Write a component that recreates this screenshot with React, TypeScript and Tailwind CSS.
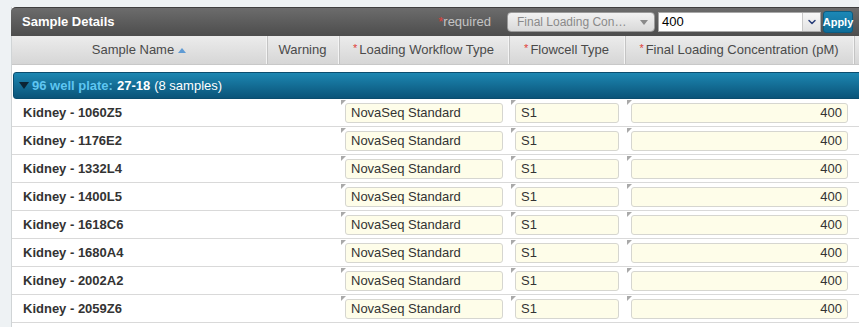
import { ChevronDown } from "lucide-react";

interface SampleRow {
  name: string;
  workflow: string;
  flowcell: string;
  concentration: string;
}

const SAMPLES: SampleRow[] = [
  { name: "Kidney - 1060Z5", workflow: "NovaSeq Standard", flowcell: "S1", concentration: "400" },
  { name: "Kidney - 1176E2", workflow: "NovaSeq Standard", flowcell: "S1", concentration: "400" },
  { name: "Kidney - 1332L4", workflow: "NovaSeq Standard", flowcell: "S1", concentration: "400" },
  { name: "Kidney - 1400L5", workflow: "NovaSeq Standard", flowcell: "S1", concentration: "400" },
  { name: "Kidney - 1618C6", workflow: "NovaSeq Standard", flowcell: "S1", concentration: "400" },
  { name: "Kidney - 1680A4", workflow: "NovaSeq Standard", flowcell: "S1", concentration: "400" },
  { name: "Kidney - 2002A2", workflow: "NovaSeq Standard", flowcell: "S1", concentration: "400" },
  { name: "Kidney - 2059Z6", workflow: "NovaSeq Standard", flowcell: "S1", concentration: "400" },
];

const GRID = "grid grid-cols-[255px_72px_170px_116px_229px_1fr]";

function Req() {
  return <span className="text-[#e0403a] text-[11px] mr-[2px] relative -top-[2px]">*</span>;
}

function HeaderCell({ children, last }: { children?: React.ReactNode; last?: boolean }) {
  return (
    <div
      className={`flex items-center justify-center text-[13px] text-[#4a4a4a] ${last ? "" : "border-r border-[#f4f4f4] shadow-[1px_0_0_#c4c4c4]"}`}
    >
      {children}
    </div>
  );
}

function EditCell({ value, align = "left" }: { value: string; align?: "left" | "right" }) {
  return (
    <div className="relative flex items-center px-[6px]">
      <span className="absolute left-[2px] top-[1px] w-0 h-0 border-t-[5px] border-t-[#a9a9a9] border-r-[5px] border-r-transparent" />
      <div
        className={`mt-[1px] h-[20px] w-full flex items-center px-[5px] rounded-[3px] border border-[#d6d6d0] bg-[#fefde9] text-[13px] text-[#333] ${align === "right" ? "justify-end" : ""}`}
      >
        {value}
      </div>
    </div>
  );
}

export default function App() {
  return (
    <div
      className="w-[859px] h-[327px] overflow-hidden bg-[#eef2f4] pt-[7px] pl-[11px]"
      style={{ fontFamily: '"Liberation Sans", Arial, sans-serif' }}
    >
      <div className="w-[880px] bg-white h-full border-l border-[#d0d4d6]">
        {/* title bar */}
        <div className="h-[29px] -ml-px rounded-tl-[5px] bg-gradient-to-b from-[#6c6c6c] to-[#4d4d4d] border-t border-[#3f3f3f] flex items-center pr-[38px]">
          <div className="pl-[11px] text-[13px] font-bold text-white flex-1">Sample Details</div>
          <div className="flex items-center">
            <span className="text-[13px] text-[#c4c4c4] mr-[16px]">
              <span className="text-[#e0403a]">*</span>required
            </span>
            <div className="w-[148px] h-[20px] rounded-[4px] border border-[#9a9a9a] bg-gradient-to-b from-[#f2f2f2] to-[#d9d9d9] flex items-center pl-[9px] pr-[6px] text-[12px] text-[#8a8a8a]">
              <span className="flex-1">Final Loading Con…</span>
              <span className="w-0 h-0 border-l-[4px] border-r-[4px] border-t-[5px] border-l-transparent border-r-transparent border-t-[#8a8a8a]" />
            </div>
            <div className="ml-[3px] w-[163px] h-[20px] bg-white border border-[#a8a8a8] flex items-center">
              <span className="flex-1 pl-[3px] text-[13px] text-black">400</span>
              <span className="w-[18px] h-full border-l border-[#c8c8c8] bg-gradient-to-b from-[#f7f7f7] to-[#e2e2e2] flex items-center justify-center">
                <ChevronDown size={12} strokeWidth={3} className="text-[#2a3f7a]" />
              </span>
            </div>
            <button className="ml-[2px] w-[30px] h-[22px] rounded-[3px] bg-gradient-to-b from-[#1c88b6] to-[#0f6d98] border border-[#0b5c82] text-white text-[11px] font-bold flex items-center justify-center">
              Apply
            </button>
          </div>
        </div>

        {/* column headers */}
        <div className={`${GRID} h-[29px] bg-gradient-to-b from-[#ececec] to-[#d6d6d6] border-b border-[#c8c8c8]`}>
          <HeaderCell>
            Sample Name
            <span className="ml-[4px] w-0 h-0 border-l-[4px] border-r-[4px] border-b-[5px] border-l-transparent border-r-transparent border-b-[#5f9bd4]" />
          </HeaderCell>
          <HeaderCell>Warning</HeaderCell>
          <HeaderCell>
            <Req />Loading Workflow Type
          </HeaderCell>
          <HeaderCell>
            <Req />Flowcell Type
          </HeaderCell>
          <HeaderCell>
            <Req />Final Loading Concentration (pM)
          </HeaderCell>
          <HeaderCell last />
        </div>

        {/* group row */}
        <div className="mt-[7px] ml-px h-[27px] rounded-[3px] bg-gradient-to-b from-[#1d87b2] to-[#0a5479] border border-[#0b4d6e] flex items-center pl-[5px] text-[13px]">
          <span className="w-0 h-0 border-l-[5px] border-r-[5px] border-t-[7px] border-l-transparent border-r-transparent border-t-[#0c2433] mr-[3px]" />
          <span className="font-bold text-[#5ec6f2]">96 well plate:</span>
          <span className="font-bold text-white ml-[4px]">27-18</span>
          <span className="text-white ml-[4px]">(8 samples)</span>
        </div>

        {/* sample rows */}
        {SAMPLES.map((s) => (
          <div key={s.name} className={`${GRID} h-[28px] border-b border-[#d9d9d9]`}>
            <div className="flex items-center pl-[11px] text-[13px] font-bold text-[#333]">{s.name}</div>
            <div />
            <EditCell value={s.workflow} />
            <EditCell value={s.flowcell} />
            <EditCell value={s.concentration} align="right" />
            <div />
          </div>
        ))}
      </div>
    </div>
  );
}
